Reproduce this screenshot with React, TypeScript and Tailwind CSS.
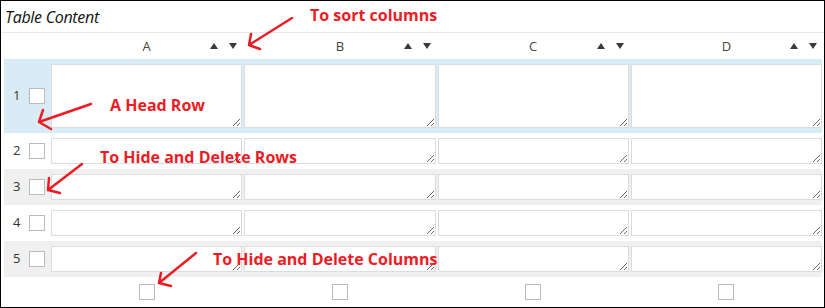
import React from 'react';

const columns = ['A', 'B', 'C', 'D'];
const rows = [1, 2, 3, 4, 5];

function SortArrows() {
  return (
    <div className="flex items-center justify-end gap-[11px] pr-[5px]">
      <svg width="8" height="6" viewBox="0 0 8 6">
        <path d="M4 0 L8 6 L0 6 Z" fill="#3a3a3a" />
      </svg>
      <svg width="8" height="6" viewBox="0 0 8 6">
        <path d="M0 0 L8 0 L4 6 Z" fill="#3a3a3a" />
      </svg>
    </div>
  );
}

function Box() {
  return <input type="checkbox" className="appearance-none w-4 h-4 border border-[#bbbbbb] bg-white block shrink-0" />;
}

function Cell({ tall }: { tall?: boolean }) {
  return (
    <textarea
      className={`block w-full ${tall ? 'h-[64px]' : 'h-[26px]'} border border-[#dcdcdc] bg-white outline-none`}
    />
  );
}

export default function App() {
  const rowBg = (n: number) => (n === 1 ? 'bg-[#d9ebf5]' : n % 2 === 1 ? 'bg-[#f0f0f0]' : 'bg-white');

  return (
    <div className="relative w-[825px] h-[308px] border border-black bg-white overflow-hidden font-['Open_Sans',sans-serif] text-[#444]">
      <div className="h-[32px] border-b border-[#e8e8e8] pl-[4px] flex items-center italic text-[16px] text-[#111] tracking-[-0.3px]">
        Table Content
      </div>

      <div className="pl-[3px] pr-[2px]">
        <div className="grid grid-cols-[45px_repeat(4,minmax(0,1fr))] gap-x-[2px] h-[26px] items-center text-[13px]">
          <div />
          {columns.map((c) => (
            <div key={c} className="grid grid-cols-[1fr_auto_1fr] items-center">
              <div />
              <span className="pt-[1px]">{c}</span>
              <SortArrows />
            </div>
          ))}
        </div>

        {rows.map((n) => (
          <div
            key={n}
            className={`grid grid-cols-[45px_repeat(4,minmax(0,1fr))] gap-x-[2px] items-center ${rowBg(n)} py-[5px]`}
          >
            <div className="flex items-center pl-[9px] text-[13px] text-[#333]">
              <span className="w-[6px]">{n}</span>
              <span className="ml-[10px]">
                <Box />
              </span>
            </div>
            {columns.map((c) => (
              <Cell key={c} tall={n === 1} />
            ))}
          </div>
        ))}

        <div className="grid grid-cols-[45px_repeat(4,minmax(0,1fr))] gap-x-[2px] pt-[7px]">
          <div />
          {columns.map((c) => (
            <div key={c} className="flex justify-center">
              <Box />
            </div>
          ))}
        </div>
      </div>

      {/* annotations */}
      <svg className="absolute left-0 top-0 pointer-events-none" width="825" height="308">
        <g stroke="#ED1C24" strokeWidth="2.5" fill="none" strokeLinecap="round" strokeLinejoin="round">
          <path d="M291 17 L248 44 M248 44 L250 33 M248 44 L259 48" />
          <path d="M90 103 L38 121 M38 121 L42 109 M38 121 L50 128" />
          <path d="M81 163 L47 189 M47 189 L48 177 M47 189 L59 192" />
          <path d="M195 252 L158 282 M158 282 L160 272 M158 282 L170 285" />
        </g>
      </svg>
      <div className="absolute left-[309px] top-[3px] text-[16px] font-bold text-[#ED1C24] leading-[22px] pointer-events-none">
        To sort columns
      </div>
      <div className="absolute left-[109px] top-[93px] text-[16px] font-bold text-[#ED1C24] leading-[22px] pointer-events-none">
        A Head Row
      </div>
      <div className="absolute left-[99px] top-[145px] text-[16px] font-bold text-[#ED1C24] leading-[22px] pointer-events-none">
        To Hide and Delete Rows
      </div>
      <div className="absolute left-[212px] top-[247px] text-[16px] font-bold text-[#ED1C24] leading-[22px] pointer-events-none">
        To Hide and Delete Columns
      </div>
    </div>
  );
}
